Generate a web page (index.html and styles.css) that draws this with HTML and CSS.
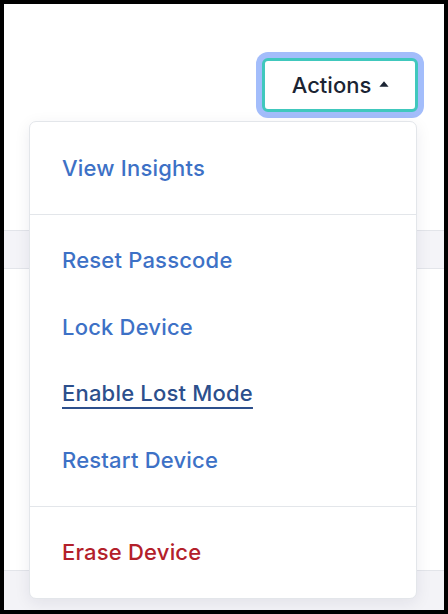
FILE: index.html
```html
<!DOCTYPE html>
<html>
<head>
<meta charset="utf-8">
<link rel="stylesheet" href="styles.css">
</head>
<body>
<div class="page">
  <div class="toolbar">
    <button class="actions-btn">
      <span>Actions</span>
      <svg class="caret" width="10" height="6" viewBox="0 0 10 6"><path d="M5 0.3 L9.6 5.7 L0.4 5.7 Z" fill="#1b2433"/></svg>
    </button>
  </div>
  <div class="table">
    <div class="row row-gray"></div>
    <div class="row row-white"></div>
    <div class="row row-foot"></div>
  </div>
  <div class="menu">
    <div class="section">
      <a class="item">View Insights</a>
    </div>
    <div class="section">
      <a class="item">Reset Passcode</a>
      <a class="item">Lock Device</a>
      <a class="item active">Enable Lost Mode</a>
      <a class="item">Restart Device</a>
    </div>
    <div class="section">
      <a class="item danger">Erase Device</a>
    </div>
  </div>
</div>
</body>
</html>
```
FILE: styles.css
```css
* { box-sizing: border-box; }
html, body { margin: 0; padding: 0; }
body {
  background: #000;
  padding: 4px;
  width: 448px;
  height: 614px;
  font-family: Inter, "Noto Sans", sans-serif;
}
.page {
  position: relative;
  width: 440px;
  height: 606px;
  background: #fff;
  overflow: hidden;
}
.toolbar {
  display: flex;
  justify-content: flex-end;
  padding: 54px 26px 0 0;
}
.actions-btn {
  width: 156px;
  height: 54px;
  border: 3px solid #40c8bd;
  border-radius: 6px;
  box-shadow: 0 0 0 6px #a3bdfb;
  background: #fff;
  display: flex;
  align-items: center;
  justify-content: center;
  gap: 8px;
  font-family: Inter, "Noto Sans", sans-serif;
  font-size: 22px;
  font-weight: 500;
  color: #1b2433;
  padding: 0 0 0 1px;
}
.caret { margin-top: -2px; }
.table {
  margin-top: 118px;
  display: flex;
  flex-direction: column;
}
.row { border-top: 1px solid #e3e5ea; }
.row-gray { height: 38px; background: #f4f4f8; }
.row-white { height: 302px; background: #fff; }
.row-foot { height: 40px; background: #f3f3f7; }
.menu {
  position: absolute;
  left: 25px;
  top: 117px;
  width: 388px;
  background: #fff;
  border: 1px solid #e3e6ea;
  border-radius: 7px;
  box-shadow: 0 4px 16px rgba(20, 30, 60, 0.08);
}
.section {
  display: flex;
  flex-direction: column;
  padding: 12.5px 0;
  border-top: 1px solid #e3e6ea;
}
.section:first-child { border-top: none; }
.item {
  height: 66.5px;
  display: flex;
  align-items: center;
  padding-left: 32px;
  font-size: 22px;
  font-weight: 500;
  letter-spacing: 0.2px;
  color: #3d71c6;
  text-decoration: none;
}
.item.active {
  color: #2c4f8c;
  text-decoration: underline;
  text-underline-offset: 6px;
  text-decoration-thickness: 2px;
}
.item.danger { color: #b3202a; }
```
